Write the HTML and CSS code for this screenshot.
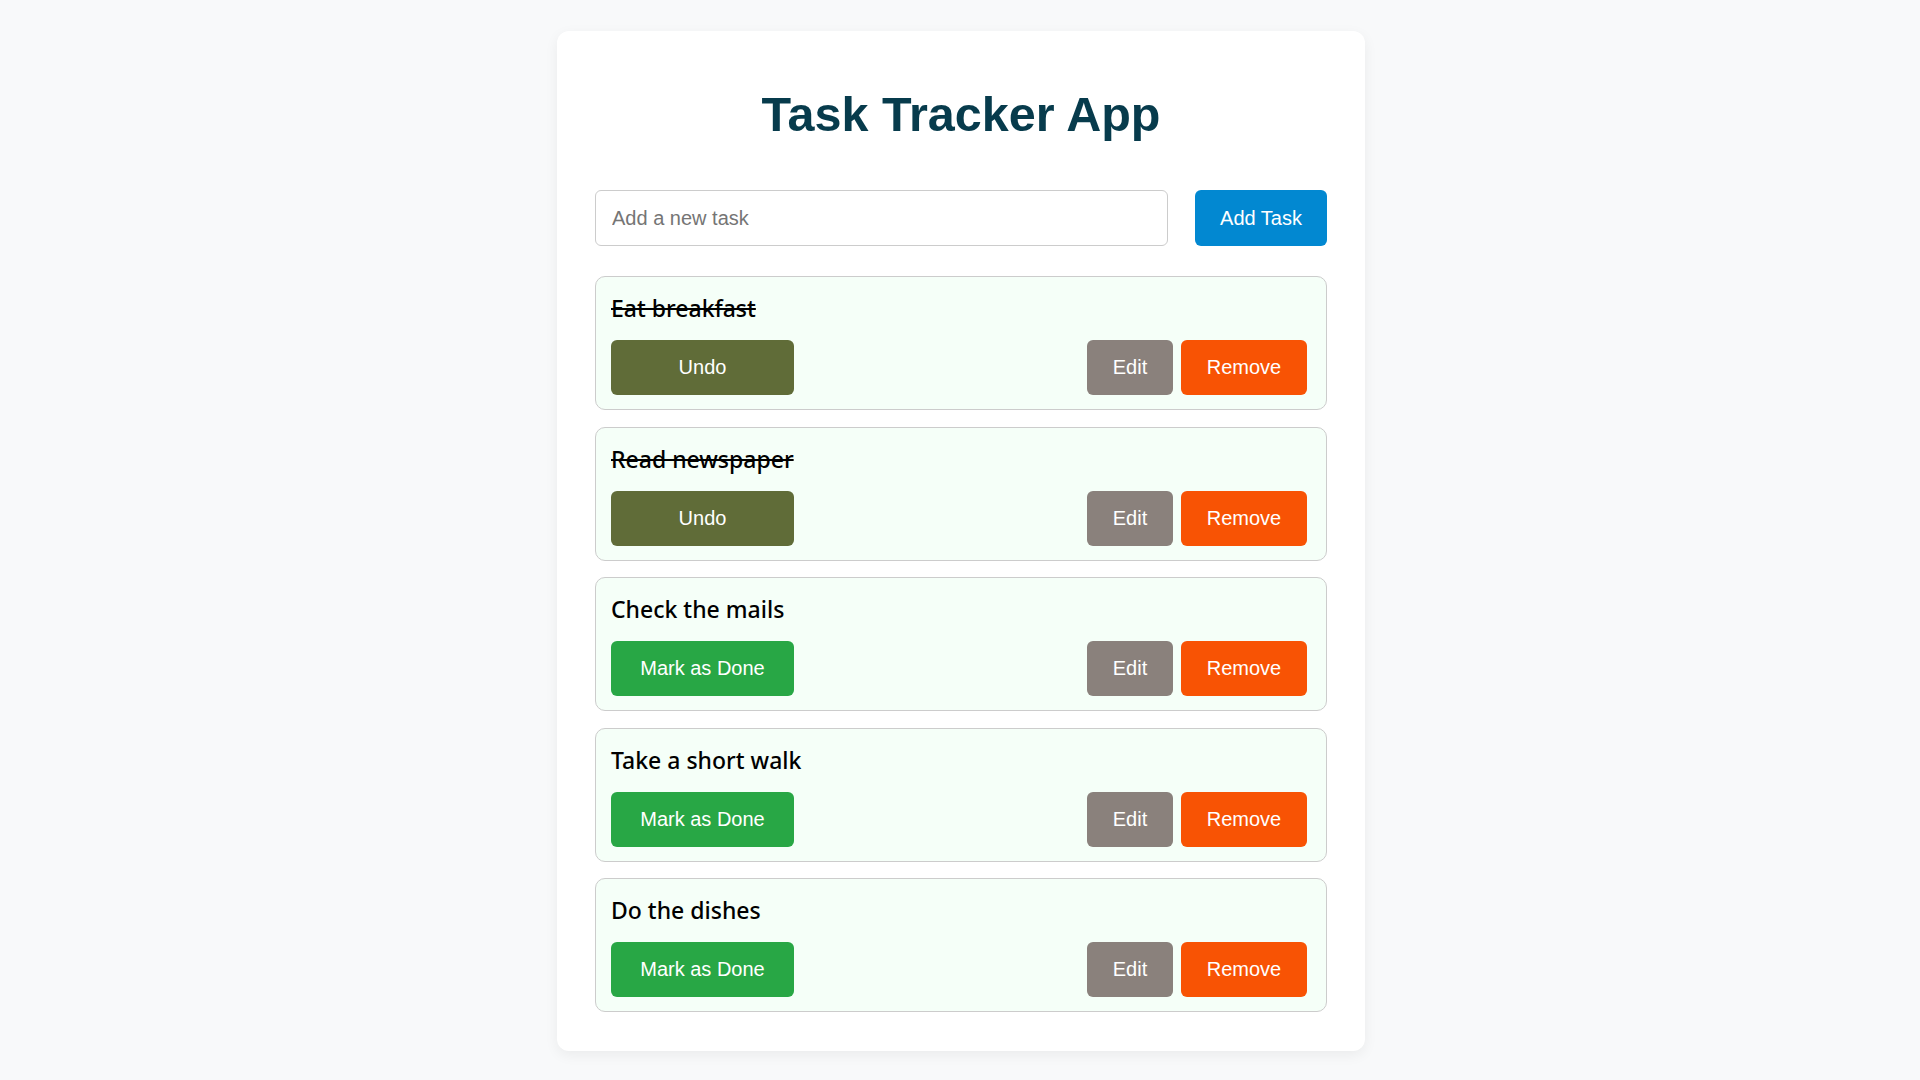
FILE: index.html
```html
<!DOCTYPE html>
<html lang="en">
<head>
<meta charset="utf-8">
<title>Task Tracker App</title>
<link rel="stylesheet" href="styles.css">
</head>
<body>
<div class="app">
  <h1 class="title">Task Tracker App</h1>
  <form class="add-form">
    <input class="task-input" type="text" placeholder="Add a new task">
    <button class="btn btn-add" type="button">Add Task</button>
  </form>
  <ul class="task-list">
    <li class="task">
      <span class="task-text done">Eat breakfast</span>
      <div class="task-actions">
        <button class="btn btn-toggle btn-undo" type="button">Undo</button>
        <div class="task-edit">
          <button class="btn btn-edit" type="button">Edit</button>
          <button class="btn btn-remove" type="button">Remove</button>
        </div>
      </div>
    </li>
    <li class="task">
      <span class="task-text done">Read newspaper</span>
      <div class="task-actions">
        <button class="btn btn-toggle btn-undo" type="button">Undo</button>
        <div class="task-edit">
          <button class="btn btn-edit" type="button">Edit</button>
          <button class="btn btn-remove" type="button">Remove</button>
        </div>
      </div>
    </li>
    <li class="task">
      <span class="task-text">Check the mails</span>
      <div class="task-actions">
        <button class="btn btn-toggle btn-done" type="button">Mark as Done</button>
        <div class="task-edit">
          <button class="btn btn-edit" type="button">Edit</button>
          <button class="btn btn-remove" type="button">Remove</button>
        </div>
      </div>
    </li>
    <li class="task">
      <span class="task-text">Take a short walk</span>
      <div class="task-actions">
        <button class="btn btn-toggle btn-done" type="button">Mark as Done</button>
        <div class="task-edit">
          <button class="btn btn-edit" type="button">Edit</button>
          <button class="btn btn-remove" type="button">Remove</button>
        </div>
      </div>
    </li>
    <li class="task">
      <span class="task-text">Do the dishes</span>
      <div class="task-actions">
        <button class="btn btn-toggle btn-done" type="button">Mark as Done</button>
        <div class="task-edit">
          <button class="btn btn-edit" type="button">Edit</button>
          <button class="btn btn-remove" type="button">Remove</button>
        </div>
      </div>
    </li>
  </ul>
</div>
</body>
</html>
```

FILE: styles.css
```css
* {
  box-sizing: border-box;
}

body {
  margin: 0;
  padding: 31px 0 20px 2px;
  background: #f8f9fa;
  font-family: "Noto Sans", "Open Sans", sans-serif;
}

.app {
  width: 808px;
  margin: 0 auto;
  padding: 38px 38px 39px;
  background: #ffffff;
  border-radius: 12px;
  box-shadow: 0 4px 14px rgba(0, 0, 0, 0.06);
}

.title {
  margin: 18px 0 48px;
  text-align: center;
  font-family: "Liberation Sans", Arial, sans-serif;
  font-size: 48.5px;
  font-weight: bold;
  line-height: 55px;
  color: #073b4c;
}

.add-form {
  display: flex;
  gap: 27px;
  margin: 0 0 30px;
}

.task-input {
  flex: 1;
  height: 56px;
  padding: 0 16px;
  border: 1px solid #cccccc;
  border-radius: 6px;
  font-family: "Liberation Sans", Arial, sans-serif;
  font-size: 20px;
  color: #333;
  background: #fff;
  outline: none;
}

.task-input::placeholder {
  color: #757575;
}

.btn {
  height: 55px;
  padding: 0 25.8px;
  border: none;
  border-radius: 6px;
  font-family: "Liberation Sans", Arial, sans-serif;
  font-size: 20px;
  color: #ffffff;
  cursor: pointer;
}

.btn-add {
  height: 56px;
  width: 132px;
  padding: 0;
  background: #0288d1;
}

.task-list {
  list-style: none;
  margin: 0;
  padding: 0;
  display: flex;
  flex-direction: column;
  gap: 16.5px;
}

.task {
  padding: 15px 15px 14px;
  border: 1px solid #cccccc;
  border-radius: 10px;
  background: #f5fff8;
}

.task-text {
  display: block;
  font-size: 23px;
  font-weight: 500;
  line-height: 32px;
  color: #000000;
  margin-bottom: 16px;
}

.task-text.done {
  text-decoration: line-through;
}

.task-actions {
  display: flex;
  justify-content: space-between;
  align-items: center;
}

.task-edit {
  display: flex;
  gap: 8px;
  margin-right: 4px;
}

.btn-toggle {
  width: 183px;
  padding: 0;
}

.btn-undo {
  background: #606c38;
}

.btn-done {
  background: #28a745;
}

.btn-edit {
  width: 86px;
  padding: 0;
  background: #8a817c;
}

.btn-remove {
  width: 126px;
  padding: 0;
  background: #f85304;
}
```
